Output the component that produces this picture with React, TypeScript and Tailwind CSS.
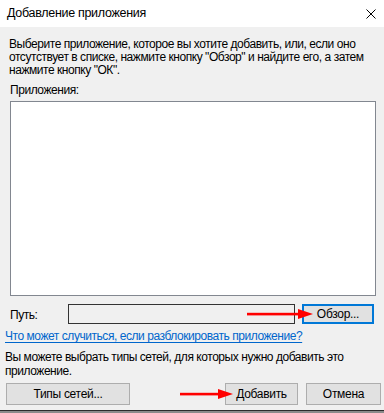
import React from 'react';

const font = "font-['Segoe_UI','Liberation_Sans',Arial,sans-serif]";

function RedArrow({ className, length }: { className: string; length: number }) {
    // horizontal red arrow pointing right
    return (
        <svg className={className} width={length} height={12} viewBox={`0 0 ${length} 12`}>
            <rect x={0} y={4.8} width={length - 13} height={2.6} fill="#ff0000" />
            <polygon points={`${length - 15},1 ${length},6 ${length - 15},11`} fill="#ff0000" />
        </svg>
    );
}

function Button({ children, className }: { children: React.ReactNode; className: string }) {
    return (
        <button
            type="button"
            className={`h-[22px] bg-[#e1e1e1] border border-[#adadad] text-[12px] tracking-[-0.3px] text-black flex items-center justify-center ${className}`}
        >
            {children}
        </button>
    );
}

export default function App() {
    return (
        <div className={`relative w-[384px] h-[413px] overflow-hidden bg-[#f0f0f0] flex flex-col text-[12px] tracking-[-0.45px] text-black ${font}`}>
            {/* Title bar */}
            <div className="h-[27px] shrink-0 bg-white flex items-center justify-between pl-[7px] pr-[8px]">
                <span className="leading-[13px] text-[12.5px] tracking-[-0.3px]">Добавление приложения</span>
                <svg width="10" height="10" viewBox="0 0 10 10">
                    <path d="M0.5 0.5 L9.5 9.5 M9.5 0.5 L0.5 9.5" stroke="#000" strokeWidth="1" />
                </svg>
            </div>

            {/* Body */}
            <div className="flex flex-col">
                <p className="mt-[11px] pl-[9px] leading-[13px] whitespace-nowrap">
                    Выберите приложение, которое вы хотите добавить, или, если оно
                    <br />
                    отсутствует в списке, нажмите кнопку "Обзор" и найдите его, а затем
                    <br />
                    нажмите кнопку "ОК".
                </p>

                <div className="mt-[7px] pl-[10px] leading-[13px]">Приложения:</div>

                <div className="mt-[4px] ml-[10px] w-[366px] h-[195px] bg-white border border-[#828790]" />

                {/* Path row */}
                <div className="mt-[8px] flex items-center h-[20px]">
                    <span className="ml-[10px] w-[58px] leading-[13px] mt-[2px]">Путь:</span>
                    <div className="w-[227px] h-[20px] border border-[#333333] bg-[#f0f0f0]" />
                    <button
                        type="button"
                        className="ml-[7px] w-[72px] h-[20px] bg-[#e1e1e1] border-2 border-[#0078d7] text-[12px] tracking-[-0.3px] flex items-center justify-center"
                    >
                        Обзор...
                    </button>
                </div>

                <a className="mt-[6px] ml-[5px] leading-[13px] text-[#0066cc] underline underline-offset-[2px] self-start whitespace-nowrap">
                    Что может случиться, если разблокировать приложение?
                </a>

                <p className="mt-[7px] pl-[5px] leading-[14px] whitespace-nowrap">
                    Вы можете выбрать типы сетей, для которых нужно добавить это
                    <br />
                    приложение.
                </p>

                {/* Buttons */}
                <div className="mt-[5px] flex items-center">
                    <Button className="ml-[6px] w-[124px]">Типы сетей...</Button>
                    <Button className="ml-[95px] w-[73px]">Добавить</Button>
                    <Button className="ml-[8px] w-[75px]">Отмена</Button>
                </div>
            </div>

            {/* Bottom edge of whatever lies beneath */}
            <div className="absolute left-0 right-0 bottom-0 h-[3px] border-t border-[#2b2b2b] bg-[#8a8a8a]" />

            {/* Annotation arrows */}
            <RedArrow className="absolute left-[247px] top-[308px]" length={66} />
            <RedArrow className="absolute left-[180px] top-[388px]" length={53} />
        </div>
    );
}
